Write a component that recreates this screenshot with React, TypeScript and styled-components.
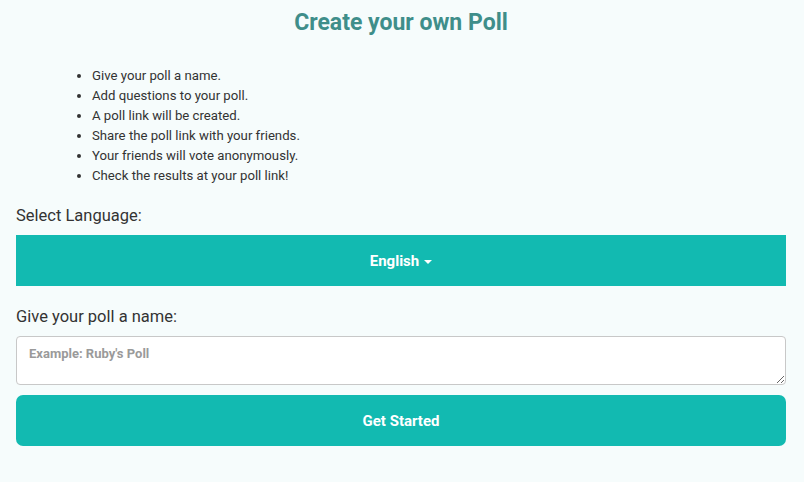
import React, { useState } from "react";
import styled, { createGlobalStyle } from "styled-components";

const GlobalStyle = createGlobalStyle`
  html, body {
    margin: 0;
    padding: 0;
    background: #f6fcfc;
    font-family: Roboto, "Liberation Sans", sans-serif;
    color: #333;
  }
  * {
    box-sizing: border-box;
  }
`;

const Page = styled.div`
  padding: 8px 16px 0 16px;
  width: 802px;
  display: flex;
  flex-direction: column;
`;

const Title = styled.h1`
  margin: 0;
  height: 30px;
  text-align: center;
  font-size: 23px;
  line-height: 30px;
  font-weight: 700;
  color: #3f8e8a;
`;

const Steps = styled.ul`
  margin: 28px 0 0 0;
  padding: 0 0 0 76px;
  list-style: disc;
  font-size: 13.2px;
  line-height: 20px;
  color: #333;
`;

const Label = styled.label<{ $top: number }>`
  display: block;
  font-size: 16.5px;
  line-height: 22px;
  color: #333;
  margin: ${(p) => p.$top}px 0 8px 0;
`;

const TealButton = styled.button<{ $radius?: number; $height: number }>`
  width: 100%;
  height: ${(p) => p.$height}px;
  border: none;
  border-radius: ${(p) => p.$radius ?? 0}px;
  background: #12bab1;
  color: #fff;
  font-family: inherit;
  font-size: 15px;
  font-weight: 700;
  display: flex;
  align-items: center;
  justify-content: center;
  gap: 5px;
  cursor: pointer;
`;

const Caret = styled.span`
  width: 0;
  height: 0;
  margin-top: 2px;
  border-left: 4px solid transparent;
  border-right: 4px solid transparent;
  border-top: 4px solid #fff;
`;

const NameInput = styled.textarea`
  display: block;
  width: 100%;
  height: 49px;
  margin: 0 0 10px 0;
  padding: 9px 12px;
  border: 1px solid #c8c8c8;
  border-radius: 4px;
  background: #fff;
  font-family: inherit;
  font-size: 13px;
  font-weight: 700;
  color: #333;
  resize: vertical;
  &::placeholder {
    color: #9a9a9a;
  }
`;

const steps = [
  "Give your poll a name.",
  "Add questions to your poll.",
  "A poll link will be created.",
  "Share the poll link with your friends.",
  "Your friends will vote anonymously.",
  "Check the results at your poll link!",
];

export default function App() {
  const [name, setName] = useState("");
  return (
    <>
      <GlobalStyle />
      <Page>
        <Title>Create your own Poll</Title>
        <Steps>
          {steps.map((s) => (
            <li key={s}>{s}</li>
          ))}
        </Steps>
        <Label $top={19}>Select Language:</Label>
        <TealButton $height={51}>
          English <Caret />
        </TealButton>
        <Label $top={20}>Give your poll a name:</Label>
        <NameInput
          placeholder="Example: Ruby's Poll"
          value={name}
          onChange={(e) => setName(e.target.value)}
        />
        <TealButton $height={51} $radius={7}>
          Get Started
        </TealButton>
      </Page>
    </>
  );
}
